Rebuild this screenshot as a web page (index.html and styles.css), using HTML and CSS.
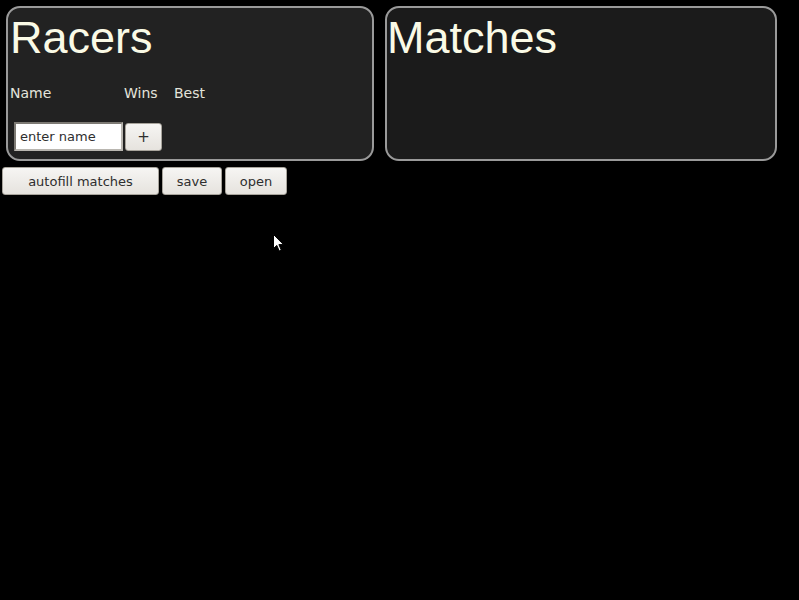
FILE: index.html
```html
<!DOCTYPE html>
<html>
<head>
<meta charset="utf-8">
<link rel="stylesheet" href="styles.css">
</head>
<body>
<div class="top">
  <section class="panel racers">
    <h1 class="title">Racers</h1>
    <div class="cols">
      <span class="col-name">Name</span>
      <span class="col-wins">Wins</span>
      <span class="col-best">Best</span>
    </div>
    <div class="add-row">
      <input class="name-input" type="text" placeholder="enter name">
      <button class="btn plus">+</button>
    </div>
  </section>
  <section class="panel matches">
    <h1 class="title">Matches</h1>
  </section>
</div>
<div class="actions">
  <button class="btn autofill">autofill matches</button>
  <button class="btn save">save</button>
  <button class="btn open">open</button>
</div>
<svg class="cursor" width="12" height="19" viewBox="0 0 12 19"><path d="M0.5 0.5 L0.5 14.5 L3.8 11.4 L6.2 17 L8.3 16.1 L5.9 10.6 L10.5 10.6 Z" fill="#fff" stroke="#000" stroke-width="1"/></svg>
</body>
</html>
```
FILE: styles.css
```css
html, body {
  margin: 0;
  padding: 0;
  background: #000;
  height: 100%;
}
body {
  font-family: "DejaVu Sans", sans-serif;
  position: relative;
}
.top {
  display: flex;
  gap: 11px;
  padding: 6px 0 0 6px;
}
.panel {
  border: 2px solid #9a9a9a;
  border-radius: 14px;
  box-sizing: border-box;
  height: 155px;
}
.racers {
  width: 368px;
  background: #222222;
}
.matches {
  width: 392px;
  background: #1b1b1b;
}
.title {
  font-family: "Liberation Sans", Arial, sans-serif;
  font-weight: normal;
  font-size: 45px;
  line-height: 53px;
  color: #fafae6;
  margin: 3px 0 0 0;
  padding: 0;
}
.racers .title { margin-left: 2px; }
.matches .title { margin-left: 0; }
.cols {
  display: flex;
  margin-top: 21px;
  font-size: 14px;
  line-height: 17px;
  color: #e4e4dc;
}
.col-name { width: 114px; margin-left: 2px; }
.col-wins { width: 50px; }
.add-row {
  display: flex;
  margin: 20px 0 0 6px;
  gap: 2px;
  align-items: flex-start;
}
.name-input {
  width: 109px;
  height: 29px;
  box-sizing: border-box;
  margin: 0;
  padding: 0 4px;
  border: 2px solid #7d7a74;
  border-right-color: #b9b6b0;
  border-bottom-color: #b9b6b0;
  background: #fff;
  font-family: "DejaVu Sans", sans-serif;
  font-size: 13px;
  color: #333;
  outline: none;
}
.name-input::placeholder { color: #2e2e2e; }
.btn {
  font-family: "DejaVu Sans", sans-serif;
  font-size: 13px;
  color: #2e2e2e;
  background: linear-gradient(#f6f5f3, #e6e3de);
  border: 1px solid #a8a49c;
  border-radius: 3px;
  height: 28px;
  padding: 0;
  margin: 0;
  box-sizing: border-box;
}
.plus { width: 37px; margin-top: 1px; font-size: 15px; }
.actions {
  display: flex;
  gap: 3px;
  padding: 6px 0 0 2px;
}
.autofill { width: 157px; }
.save { width: 60px; }
.open { width: 62px; }
.cursor {
  position: absolute;
  left: 273px;
  top: 234px;
}
```
